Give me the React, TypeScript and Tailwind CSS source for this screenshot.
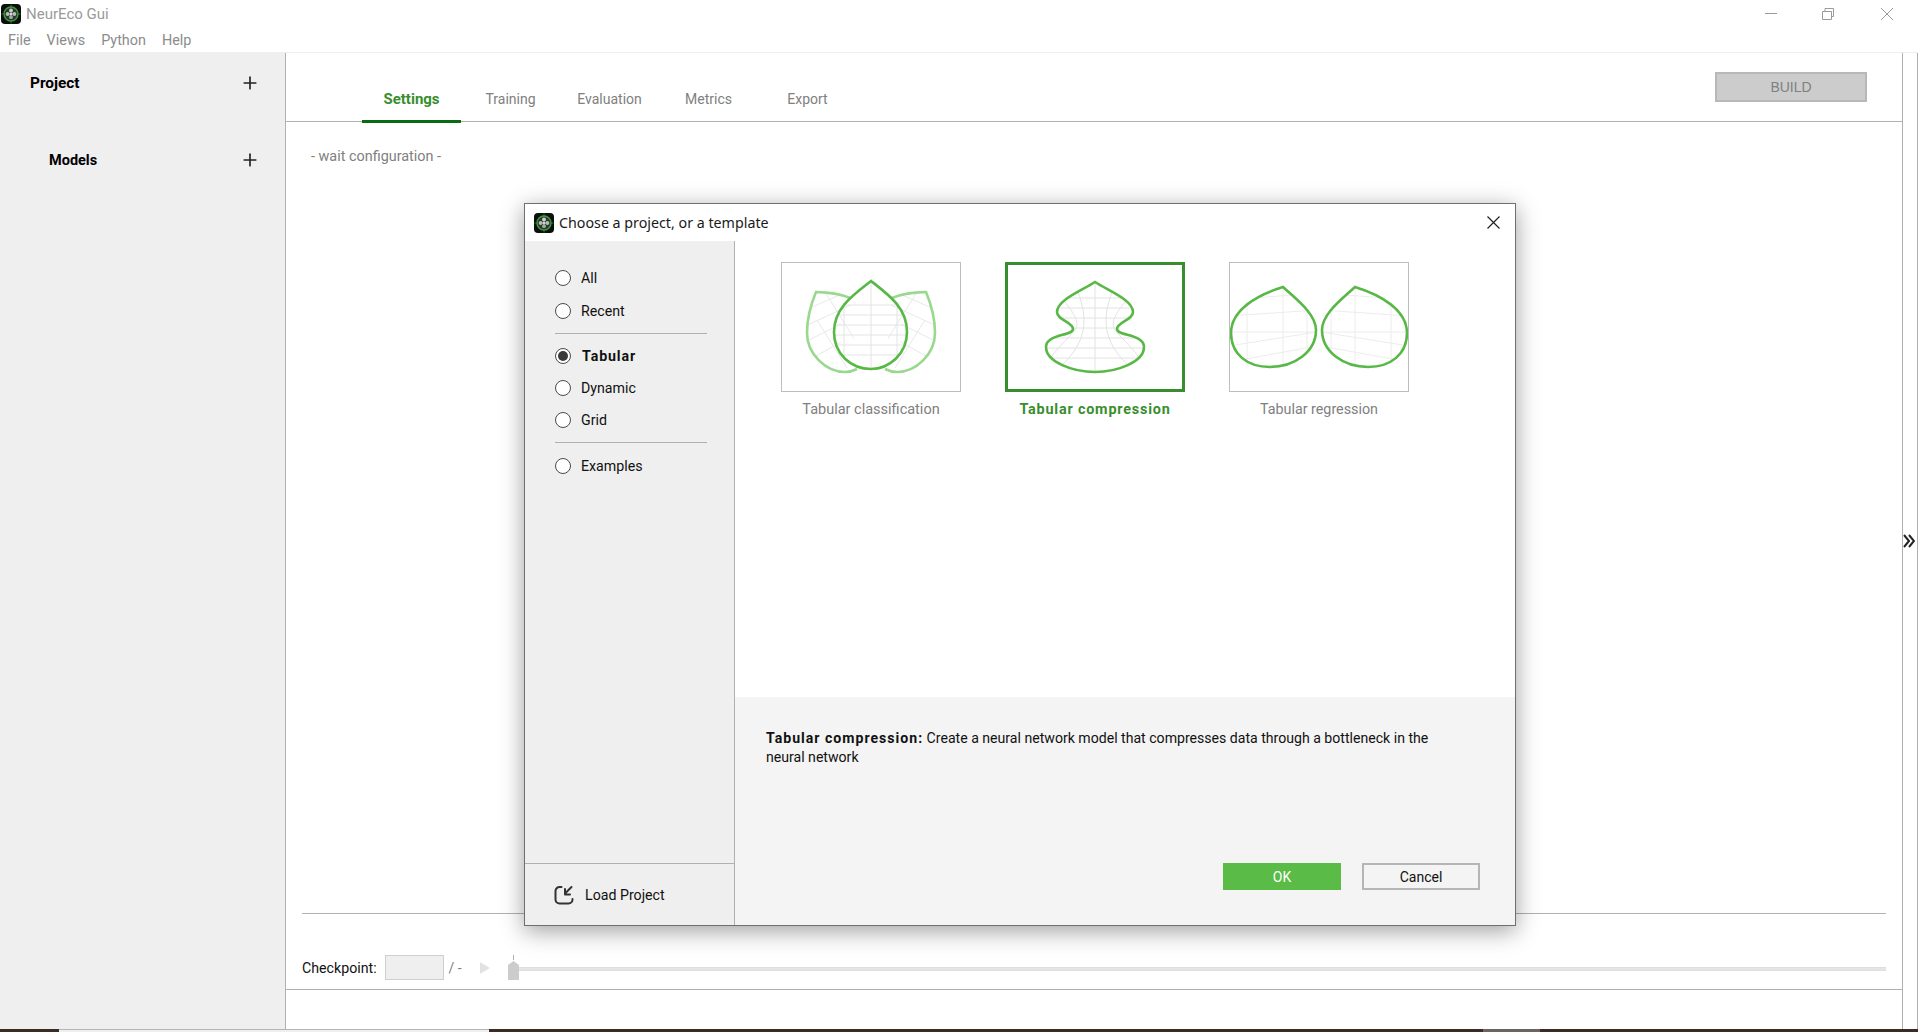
import { Plus } from 'lucide-react'

const TABS = ['Settings', 'Training', 'Evaluation', 'Metrics', 'Export']
const MENU = ['File', 'Views', 'Python', 'Help']

function Logo() {
  return (
    <svg width="20" height="20" viewBox="0 0 20 20" className="shrink-0">
      <rect width="20" height="20" rx="4" fill="#0c0f0c" />
      <path d="M10 0.5V3.5M10 16.5V19.5M0.5 10H3.5M16.5 10H19.5" stroke="#2e6b2e" strokeWidth="1" />
      <circle cx="10" cy="10" r="7" fill="#2b3a2f" stroke="#3f9a3c" strokeWidth="1.4" />
      <circle cx="10" cy="6.6" r="2" fill="#c9cdc9" />
      <circle cx="6.6" cy="10" r="1.9" fill="#b8bdb8" />
      <circle cx="13.4" cy="10" r="1.9" fill="#b8bdb8" />
      <circle cx="10" cy="13.2" r="1.9" fill="#a2a8a2" />
      <circle cx="10" cy="10" r="1.6" fill="#d4d8d4" />
    </svg>
  )
}

function Radio({ label, checked }: { label: string; checked?: boolean }) {
  return (
    <div className="flex items-center h-8">
      <span className="w-4 h-4 rounded-full border border-[#4a4a4a] bg-white flex items-center justify-center shrink-0">
        {checked && <span className="w-[10px] h-[10px] rounded-full bg-[#3a3a3a]" />}
      </span>
      <span className={`text-[14.2px] text-[#111] pt-px ${checked ? 'ml-[11px] font-bold tracking-[0.9px]' : 'ml-[10px]'}`}>{label}</span>
    </div>
  )
}

function ClassificationThumb() {
  const drop = 'M90 19C108 33 126 46 126 70C126 92 108 107 90 107C70 107 53 92 53 70C53 46 72 33 90 19Z'
  const wings = 'M69 36C58 31 46 30.5 35 30C30 42 26 56 26 71C26 92 45 110 64 110C68 110 72 109 76 107ZM111 36C122 31 134 30.5 145 30C150 42 154 56 154 71C154 92 135 110 116 110C112 110 108 109 104 107Z'
  return (
    <svg viewBox="1 1 178 128" className="w-full h-full">
      <defs>
        <clipPath id="cl-drop"><path d={drop} /></clipPath>
        <clipPath id="cl-wings"><path d={wings} /></clipPath>
      </defs>
      <g clipPath="url(#cl-wings)" stroke="#e8e8e8" strokeWidth="1" fill="none">
        <path d="M20 50L70 28M20 66L72 42M20 82L60 62M28 98L60 80M44 30L74 78M36 58L66 106" />
        <path d="M160 50L110 28M160 66L108 42M160 82L120 62M152 98L120 80M136 30L106 78M144 58L114 106" />
      </g>
      <g clipPath="url(#cl-drop)" stroke="#e4e4e4" strokeWidth="1" fill="none">
        <path d="M50 43H130M50 53H130M50 63H130M50 73H130M50 83H130M50 93H130M63 15V110M90 15V110M116 15V110" />
      </g>
      <path d="M69 36C58 31 46 30.5 35 30C30 42 26 56 26 71C26 92 45 110 64 110C68 110 72 109 76 107" fill="none" stroke="#9ad88f" strokeWidth="2.6" />
      <path d="M111 36C122 31 134 30.5 145 30C150 42 154 56 154 71C154 92 135 110 116 110C112 110 108 109 104 107" fill="none" stroke="#9ad88f" strokeWidth="2.6" />
      <path d={drop} fill="none" stroke="#57b846" strokeWidth="2.6" />
    </svg>
  )
}

function CompressionThumb() {
  const shape = 'M90 20C104 29 128 38 128 50C128 58 112 60 112 67C112 74 139 72 139 85C139 100 112 110 90 110C68 110 41 100 41 85C41 72 68 74 68 67C68 60 52 58 52 50C52 38 76 29 90 20Z'
  return (
    <svg viewBox="3 3 174 124" className="w-full h-full">
      <defs>
        <clipPath id="cl-comp"><path d={shape} /></clipPath>
      </defs>
      <g clipPath="url(#cl-comp)" stroke="#e2e2e2" strokeWidth="1" fill="none">
        <path d="M35 36H145M35 46H145M35 56H145M35 66H145M35 76H145M35 86H145M35 96H145M90 15V112" />
        <path d="M73 30C82 55 84 78 56 104M107 30C98 55 96 78 124 104" />
        <path d="M60 40C72 55 74 62 70 68C62 78 50 88 46 96M120 40C108 55 106 62 110 68C118 78 130 88 134 96" />
      </g>
      <path d={shape} fill="none" stroke="#57b846" strokeWidth="2.6" />
    </svg>
  )
}

function RegressionThumb() {
  const left = 'M54 25C68 38 87 52 87 68C87 90 65 105 41 105C18 105 2 92 2 71C2 48 28 33 54 25Z'
  const right = 'M126 25C112 38 93 52 93 68C93 90 115 105 139 105C162 105 178 92 178 71C178 48 152 33 126 25Z'
  return (
    <svg viewBox="1 1 178 128" className="w-full h-full">
      <defs>
        <clipPath id="cl-reg-l"><path d={left} /></clipPath>
        <clipPath id="cl-reg-r"><path d={right} /></clipPath>
      </defs>
      <g clipPath="url(#cl-reg-l)" stroke="#ececec" strokeWidth="1" fill="none">
        <path d="M18 20V110M54 20V110M78 20V110" />
        <path d="M0 38L88 31M0 54L88 48M0 70H88M0 84L88 70M0 100L88 84M0 112L88 96" />
      </g>
      <g clipPath="url(#cl-reg-r)" stroke="#ececec" strokeWidth="1" fill="none">
        <path d="M162 20V110M126 20V110M102 20V110" />
        <path d="M180 38L92 31M180 54L92 48M180 70H92M180 84L92 70M180 100L92 84M180 112L92 96" />
      </g>
      <path d={left} fill="none" stroke="#57b846" strokeWidth="2.6" />
      <path d={right} fill="none" stroke="#57b846" strokeWidth="2.6" />
    </svg>
  )
}

function Dialog() {
  return (
    <div className="absolute left-[524px] top-[203px] w-[992px] h-[723px] bg-white border border-[#6f6f6f] shadow-[0_5px_22px_rgba(0,0,0,0.38)] flex flex-col">
      <div className="h-[37px] flex items-center pl-[9px] pr-[15px] shrink-0">
        <Logo />
        <span className="ml-[5px] text-[14.25px] text-[#1a1a1a] font-['Noto_Sans',sans-serif]">Choose a project, or a template</span>
        <svg width="13" height="13" viewBox="0 0 13 13" className="ml-auto" fill="none" stroke="#222" strokeWidth="1.2">
          <path d="M0.5 0.5L12.5 12.5M12.5 0.5L0.5 12.5" />
        </svg>
      </div>

      <div className="flex-1 flex min-h-0">
        {/* left filter panel */}
        <div className="w-[210px] bg-[#efefef] border-r border-[#b0b0b0] flex flex-col shrink-0">
          <div className="pl-[30px] pt-[21px] flex-1">
            <div className="flex flex-col gap-px">
              <Radio label="All" />
              <Radio label="Recent" />
            </div>
            <div className="w-[152px] border-t border-[#b0b0b0] mt-[6px] mb-[6px]" />
            <Radio label="Tabular" checked />
            <Radio label="Dynamic" />
            <Radio label="Grid" />
            <div className="w-[152px] border-t border-[#b0b0b0] mt-[6px] mb-[7px]" />
            <Radio label="Examples" />
          </div>
          <div className="h-[62px] border-t border-[#b0b0b0] flex items-center pl-[29px] shrink-0">
            <svg width="20" height="20" viewBox="0 0 20 20" fill="none" stroke="#333" strokeWidth="2" strokeLinecap="round" strokeLinejoin="round">
              <path d="M7.5 2H5.5A4 4 0 0 0 1.5 6V14.5A4 4 0 0 0 5.5 18.5H14.5A4 4 0 0 0 18.5 14.5V14" />
              <path d="M17.5 2L11 8.5M11 4V9.5H16" />
            </svg>
            <span className="ml-[11px] pt-[2px] text-[14.2px] text-[#111]">Load Project</span>
          </div>
        </div>

        {/* templates */}
        <div className="flex-1 flex flex-col min-w-0">
          <div className="h-[456px] bg-white pl-[46px] pt-[21px] flex gap-[44px] shrink-0">
            <div className="w-[180px] flex flex-col items-center">
              <div className="w-[180px] h-[130px] border border-[#bdbdbd]"><ClassificationThumb /></div>
              <span className="mt-[7px] text-[14.5px] text-[#808080]">Tabular classification</span>
            </div>
            <div className="w-[180px] flex flex-col items-center">
              <div className="w-[180px] h-[130px] border-[3px] border-[#388e2e]"><CompressionThumb /></div>
              <span className="mt-[7px] text-[14.4px] font-bold tracking-[0.8px] text-[#388e2e]">Tabular compression</span>
            </div>
            <div className="w-[180px] flex flex-col items-center">
              <div className="w-[180px] h-[130px] border border-[#bdbdbd]"><RegressionThumb /></div>
              <span className="mt-[7px] text-[14.3px] text-[#808080]">Tabular regression</span>
            </div>
          </div>
          <div className="flex-1 bg-[#f4f4f4] pl-[31px] pr-[35px] pb-[35px] pt-[32px] flex flex-col justify-between">
            <p className="w-[680px] text-[14.1px] leading-[19px] text-[#111]">
              <b className="tracking-[1px]">Tabular compression:</b> Create a neural network model that compresses data through a bottleneck in the neural network
            </p>
            <div className="flex justify-end gap-[21px]">
              <button className="w-[118px] h-[27px] pt-px bg-[#5abb46] text-white text-[14px]">OK</button>
              <button className="w-[118px] h-[27px] pt-px border-2 border-[#b5b5b5] text-[#111] text-[14px]">Cancel</button>
            </div>
          </div>
        </div>
      </div>
    </div>
  )
}

export default function App() {
  return (
    <div className="relative w-[1918px] h-[1032px] overflow-hidden bg-white flex flex-col font-[Roboto,sans-serif]">
      {/* window chrome */}
      <div className="h-[53px] border-b border-[#eeeeee] shrink-0">
        <div className="h-[28px] flex items-center pl-px">
          <Logo />
          <span className="ml-[5px] text-[15px] text-[#9a9a9a]">NeurEco Gui</span>
          <div className="ml-auto flex items-center pr-[25px]">
            <svg width="12" height="12" viewBox="0 0 12 12" fill="none" stroke="#9a9a9a" className="mr-[45px]"><path d="M0 5.5H12" /></svg>
            <svg width="12" height="12" viewBox="0 0 12 12" fill="none" stroke="#9a9a9a" className="mr-[47px]"><path d="M0.5 3.5H9.5V11.5H0.5ZM3 3V0.5H11.5V8.5H9.5" /></svg>
            <svg width="12" height="12" viewBox="0 0 12 12" fill="none" stroke="#9a9a9a"><path d="M0 0L12 12M12 0L0 12" /></svg>
          </div>
        </div>
        <div className="h-[24px] pt-[2px] flex items-center gap-4 pl-2">
          {MENU.map((m) => (
            <span key={m} className="text-[14.4px] text-[#8c8c8c]">{m}</span>
          ))}
        </div>
      </div>

      <div className="flex-1 flex min-h-0">
        {/* project sidebar */}
        <div className="w-[286px] bg-[#efefef] border-r border-[#b0b0b0] shrink-0">
          <div className="mt-[19px] h-[22px] flex items-center justify-between pl-[30px] pr-[25px]">
            <span className="pt-[2px] text-[15.4px] font-bold text-black">Project</span>
            <Plus size={20} strokeWidth={2} className="text-[#222]" />
          </div>
          <div className="mt-[55px] h-[22px] flex items-center justify-between pl-[49px] pr-[25px]">
            <span className="pt-[2px] text-[14.5px] font-bold text-black">Models</span>
            <Plus size={20} strokeWidth={2} className="text-[#222]" />
          </div>
        </div>

        {/* main */}
        <div className="w-[1616px] flex flex-col shrink-0">
          <div className="h-[69px] border-b border-[#b0b0b0] flex justify-between items-start pl-[76px] pr-[35px] shrink-0">
            <div className="flex self-end -mb-[2px]">
              {TABS.map((t, i) => (
                <div
                  key={t}
                  className={`w-[99px] h-[47px] pt-[2px] flex items-center justify-center border-b-[3px] ${
                    i === 0 ? 'text-[15px] border-[#0b6b12] font-bold text-[#388e2e]' : 'text-[14px] border-transparent text-[#808080]'
                  }`}
                >
                  {t}
                </div>
              ))}
            </div>
            <button className="mt-[19px] w-[152px] h-[30px] bg-[#cccccc] border-2 border-[#b8b8b8] text-[14px] text-[#808080] font-['Liberation_Sans',sans-serif]">BUILD</button>
          </div>

          <div className="flex-1 pl-[25px] pt-[22px]">
            <span className="text-[14.4px] text-[#808080]">- wait configuration -</span>
          </div>

          <div className="mx-4 h-[76px] border-t border-[#b0b0b0] pt-[32px] flex items-center shrink-0">
            <span className="pt-[2px] text-[14.2px] text-[#111]">Checkpoint:</span>
            <div className="ml-[8px] w-[59px] h-[25px] bg-[#efefef] border border-[#cfcfcf]" />
            <span className="ml-[5px] pt-[2px] text-[14px] text-[#808080]">/ -</span>
            <svg width="10" height="12" viewBox="0 0 10 12" className="ml-[18px]"><path d="M0 0L10 6L0 12Z" fill="#e2e2e2" /></svg>
            <svg width="11" height="25" viewBox="0 0 11 25" className="ml-[18px] shrink-0">
              <path d="M5.5 0V5" stroke="#b0b0b0" strokeWidth="1" />
              <path d="M0 10L5.5 6L11 10V25H0Z" fill="#cccccc" />
            </svg>
            <div className="flex-1 h-[4px] mt-[3px] bg-[#e3e6e4] border-y border-[#dcdfdd]" />
          </div>
          <div className="h-[40px] border-t border-[#b0b0b0] shrink-0" />
        </div>

        {/* collapse strip */}
        <div className="w-[16px] border-l border-[#b0b0b0] border-r flex items-center justify-center pr-[2px] shrink-0">
          <svg width="12" height="14" viewBox="0 0 12 14" fill="none" stroke="#222" strokeWidth="2">
            <path d="M1 1L6 7L1 13M6 1L11 7L6 13" />
          </svg>
        </div>
      </div>

      {/* taskbar sliver */}
      <div className="h-[3px] flex shrink-0">
        <div className="w-[59px] bg-[#3a2c25]" />
        <div className="w-[430px] bg-[#efefef] border-t border-[#b5b5b5]" />
        <div className="w-[994px] bg-[#3a2c25]" />
        <div className="w-[57px] bg-[#6b6460]" />
        <div className="flex-1 bg-[#3a2c25]" />
      </div>

      <Dialog />
    </div>
  )
}
